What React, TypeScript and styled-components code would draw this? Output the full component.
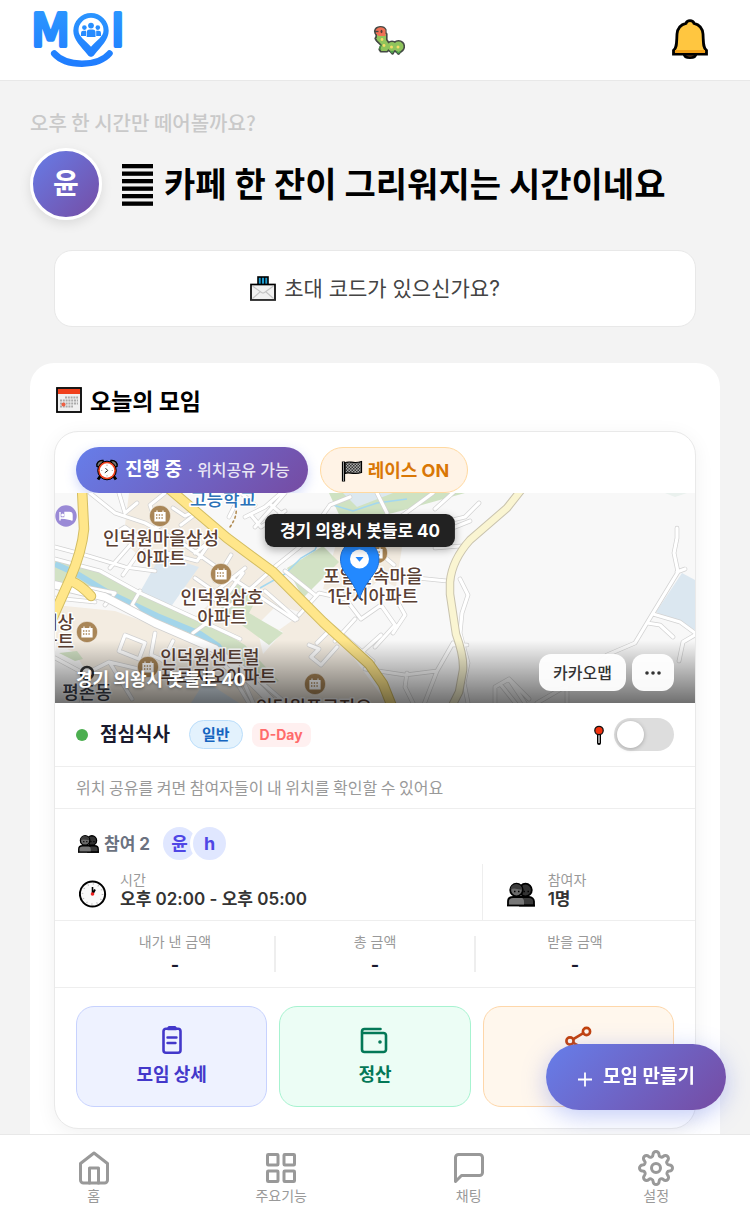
import React from "react";
import styled, { createGlobalStyle } from "styled-components";

const korean = `"Noto Sans CJK KR", Inter, sans-serif`;

const GlobalStyle = createGlobalStyle`
  *, *::before, *::after { box-sizing: border-box; }
  body { margin: 0; background: #f3f3f3; }
  body, button, input { font-family: Inter, "Noto Sans CJK KR", sans-serif; }
  button { cursor: pointer; padding: 0; border: 0; }
  h1, h2, h3, p, dl, dt, dd, ul { margin: 0; padding: 0; }
  svg { display: block; flex: none; }
`;

const Shell = styled.div`
  height: 100vh;
  display: flex;
  flex-direction: column;
  background: #f3f3f3;
  color: #000;
`;

const TopBar = styled.header`
  flex: none;
  height: 81px;
  display: flex;
  align-items: center;
  justify-content: space-between;
  padding: 0 30px;
  background: #fff;
  border-bottom: 1px solid #e8e8e8;
`;

const LogoLink = styled.a`
  padding-left: 2px;
`;

const BellButton = styled.button`
  width: 60px;
  height: 60px;
  display: grid;
  place-items: center;
  background: none;
`;

const Main = styled.main`
  flex: 1;
  min-height: 0;
  overflow-y: auto;
  scrollbar-width: none;
  padding: 28px 30px 0;
`;

const Hint = styled.p`
  font-family: ${korean};
  font-size: 20px;
  line-height: 28px;
  font-weight: 500;
  color: #c9c9c9;
`;

const Greeting = styled.div`
  display: flex;
  align-items: center;
  gap: 18px;
  margin-top: 11px;
`;

const Avatar = styled.div`
  flex: none;
  width: 72px;
  height: 72px;
  border-radius: 50%;
  border: 3px solid #fff;
  background: linear-gradient(135deg, #667eea, #764ba2) border-box;
  box-shadow: 0 4px 12px rgba(0, 0, 0, 0.1);
  display: grid;
  place-items: center;
  color: #fff;
  font-size: 28px;
  line-height: 36px;
  font-weight: 700;
`;

const Title = styled.h1`
  display: flex;
  align-items: center;
  gap: 10px;
  padding-top: 1px;
  font-size: 34px;
  line-height: 48px;
  font-weight: 700;
`;

const InviteButton = styled.button`
  display: flex;
  align-items: center;
  justify-content: center;
  gap: 8px;
  width: calc(100% - 48px);
  height: 77px;
  margin: 30px 24px 0;
  background: #fff;
  border: 1px solid #e8e8e8;
  border-radius: 18px;
  color: #444;
  font-size: 21px;
  line-height: 30px;
`;

const Section = styled.section`
  margin-top: 36px;
  padding: 20px 24px 60px;
  background: #fff;
  border-radius: 24px;
`;

const SectionTitle = styled.h2`
  display: flex;
  align-items: center;
  gap: 8px;
  padding-left: 2px;
  font-family: ${korean};
  font-size: 23px;
  line-height: 34px;
  font-weight: 700;
`;

const Card = styled.article`
  margin-top: 14px;
  background: #fff;
  border: 1px solid #e9e9e9;
  border-radius: 24px;
  box-shadow: 0 4px 20px rgba(0, 0, 0, 0.06);
  overflow: hidden;
`;

const Chips = styled.div`
  display: flex;
  gap: 12px;
  padding: 15px 21px 0;
`;

const Chip = styled.span<{ $tone: "live" | "race" }>`
  height: 46px;
  display: flex;
  align-items: center;
  border-radius: 23px;
  font-weight: 700;
  line-height: 28px;
  ${(p) =>
    p.$tone === "live"
      ? `padding: 0 18px 0 19px; gap: 6px; font-size: 19px; color: #fff;
         background: linear-gradient(135deg, #667eea, #764ba2);
         box-shadow: 0 4px 12px rgba(102, 126, 234, 0.3);`
      : `padding: 2px 18px 0 20px; gap: 5px; font-size: 18px; color: #d97706;
         background: #fff3e6; border: 1px solid #ffd9a0;`}
`;

const ChipNote = styled.span`
  font-size: 16px;
  font-weight: 500;
  color: rgba(255, 255, 255, 0.85);
`;

const MapBox = styled.div`
  position: relative;
  height: 210px;
  overflow: hidden;
  background: #f8f8f8;
`;

const MapShade = styled.div`
  position: absolute;
  inset: auto 0 0 0;
  display: flex;
  align-items: center;
  gap: 6px;
  padding: 14px 21px 12px;
  background: linear-gradient(transparent, rgba(0, 0, 0, 0.55));
`;

const MapAddress = styled.p`
  flex: 1;
  padding-top: 15px;
  color: #fff;
  font-size: 18px;
  line-height: 22px;
  font-weight: 700;
  text-shadow: 0 1px 3px rgba(0, 0, 0, 0.4);
`;

const MapButton = styled.button<{ $narrow?: boolean }>`
  width: ${(p) => (p.$narrow ? 42 : 87)}px;
  height: 37px;
  display: grid;
  place-items: center;
  border-radius: 12px;
  background: rgba(255, 255, 255, 0.95);
  color: #333;
  font-size: 16px;
  line-height: 22px;
  font-weight: 500;
`;

const Tooltip = styled.div`
  position: absolute;
  top: 21px;
  left: calc(50% - 15px);
  transform: translateX(-50%);
  padding: 5px 15px 4px;
  border-radius: 9px;
  background: #222;
  box-shadow: 0 3px 9px rgba(0, 0, 0, 0.3);
  color: #fff;
  font-size: 17px;
  line-height: 24px;
  font-weight: 700;
  white-space: nowrap;
`;

const StatusRow = styled.div`
  display: flex;
  align-items: center;
  height: 64px;
  padding: 0 21px;
  border-bottom: 1px solid #eee;
`;

const Dot = styled.span`
  width: 12px;
  height: 12px;
  border-radius: 50%;
  background: #4caf50;
`;

const EventName = styled.h3`
  margin: 0 19px 0 12px;
  color: #1a1a2e;
  font-size: 19px;
  line-height: 28px;
  font-weight: 700;
`;

const Badge = styled.span<{ $tone: "kind" | "day" }>`
  display: grid;
  place-items: center;
  font-weight: 700;
  line-height: 22px;
  ${(p) =>
    p.$tone === "kind"
      ? `height: 29px; padding: 0 12px; border-radius: 15px; font-size: 15px;
         background: #e3f2fd; border: 1px solid #bbdefb; color: #1565c0;`
      : `height: 24px; padding: 0 8px; border-radius: 8px; margin-left: 9px;
         font-size: 14px; background: #fff0f0; color: #ff6b6b;`}
`;

const ShareToggle = styled.label`
  display: flex;
  align-items: center;
  gap: 9px;
  margin-left: auto;
`;

const Switch = styled.input`
  appearance: none;
  position: relative;
  width: 60px;
  height: 33px;
  margin: 0;
  border-radius: 17px;
  background: #ddd;
  cursor: pointer;
  &::before {
    content: "";
    position: absolute;
    top: 3px;
    left: 3px;
    width: 27px;
    height: 27px;
    border-radius: 50%;
    background: #fff;
    box-shadow: 0 1px 4px rgba(0, 0, 0, 0.25);
  }
  &:checked { background: #667eea; }
  &:checked::before { left: 30px; }
`;

const Notice = styled.p`
  padding: 8px 21px 9px;
  border-bottom: 1px solid #eee;
  color: #999;
  font-family: ${korean};
  font-size: 16px;
  line-height: 24px;
`;

const People = styled.div`
  display: flex;
  align-items: center;
  padding: 14px 21px 0 23px;
  height: 55px;
  color: #6b7280;
  font-size: 17px;
  line-height: 24px;
  font-weight: 700;
`;

const PeopleCount = styled.span`
  margin: 0 10px 0 5px;
`;

const Member = styled.span`
  width: 39px;
  height: 39px;
  display: grid;
  place-items: center;
  border-radius: 50%;
  border: 3px solid #fff;
  background: #e0e7ff;
  color: #4f46e5;
  font-size: 18px;
  & + & { margin-left: -9px; }
`;

const Facts = styled.div`
  display: grid;
  grid-template-columns: 2fr 1fr;
  border-bottom: 1px solid #eee;
`;

const Fact = styled.div`
  display: flex;
  align-items: center;
  gap: 13px;
  height: 56px;
  padding: 3px 24px 0;
  & + & { border-left: 1px solid #eee; }
`;

const FactText = styled.dl`
  padding-bottom: 8px;
`;

const FactLabel = styled.dt`
  color: #999;
  font-size: 14px;
  line-height: 18px;
`;

const FactValue = styled.dd`
  color: #333;
  font-size: 17px;
  line-height: 20px;
  font-weight: 600;
`;

const Amounts = styled.dl`
  display: grid;
  grid-template-columns: repeat(3, 1fr);
  padding: 10px 20px;
  border-bottom: 1px solid #eee;
`;

const Amount = styled.div`
  position: relative;
  text-align: center;
  & + &::before {
    content: "";
    position: absolute;
    left: -1px;
    top: 5px;
    width: 2px;
    height: 36px;
    background: #eee;
  }
`;

const AmountLabel = styled.dt`
  color: #999;
  font-size: 14px;
  line-height: 22px;
`;

const AmountValue = styled.dd`
  color: #1a1a2e;
  font-size: 18px;
  line-height: 24px;
  font-weight: 700;
`;

const Actions = styled.div`
  display: grid;
  grid-template-columns: repeat(3, 1fr);
  gap: 12px;
  padding: 18px 21px 21px;
`;

const tones = {
  indigo: ["#eef2ff", "#c7d2fe", "#4338ca"],
  green: ["#ecfdf5", "#a7f3d0", "#047857"],
  orange: ["#fff7ed", "#fed7aa", "#c2410c"],
};

const ActionButton = styled.button<{ $tone: keyof typeof tones }>`
  height: 101px;
  display: flex;
  flex-direction: column;
  align-items: center;
  justify-content: center;
  gap: 7px;
  border-radius: 18px;
  background: ${(p) => tones[p.$tone][0]};
  border: 1px solid ${(p) => tones[p.$tone][1]};
  color: ${(p) => tones[p.$tone][2]};
  font-size: 18px;
  line-height: 26px;
  font-weight: 700;
`;

const CreateButton = styled.button`
  position: fixed;
  right: 24px;
  bottom: 108px;
  width: 180px;
  height: 66px;
  display: flex;
  align-items: center;
  justify-content: center;
  gap: 10px;
  border-radius: 33px;
  background: linear-gradient(135deg, #667eea, #764ba2);
  box-shadow: 0 6px 24px rgba(102, 126, 234, 0.4);
  color: #fff;
  font-size: 19px;
  line-height: 28px;
  font-weight: 700;
`;

const TabBar = styled.nav`
  flex: none;
  position: relative;
  height: 84px;
  display: grid;
  grid-template-columns: repeat(4, 1fr);
  background: #fff;
  border-top: 1px solid #e8e8e8;
`;

const Tab = styled.a`
  display: flex;
  flex-direction: column;
  align-items: center;
  padding-top: 15px;
  color: #999;
  font-size: 14px;
  line-height: 20px;
  text-decoration: none;
`;

/* ---------- drawings ---------- */

const Logo = () => (
  <svg width="86" height="60" viewBox="32 10 86 60" overflow="visible" role="img" aria-label="MOI">
    <defs>
      <linearGradient id="logoBlue" x1="0" y1="12" x2="0" y2="67" gradientUnits="userSpaceOnUse">
        <stop offset="0" stopColor="#2b95ff" />
        <stop offset="1" stopColor="#1f7cff" />
      </linearGradient>
    </defs>
    <g fill="url(#logoBlue)" stroke="url(#logoBlue)" strokeWidth="4" strokeLinejoin="round" fontFamily="DejaVu Sans" fontSize="44">
      <text x="31.4" y="46.400">M</text>
      <text x="111.300" y="46.400">I</text>
    </g>
    <path fillRule="evenodd" fill="url(#logoBlue)" d="M91 13a17.7 17.7 0 0 0-17.7 17.7c0 9.300 8 16 14.300 24 2 2.800 4.800 2.800 6.800 0 6.300-8 14.300-14.700 14.300-24A17.700 17.700 0 0 0 91 13zm0 4.800a12.500 12.500 0 0 1 12.500 12.500c0 6-6 9.500-12.500 16.500-6.500-7-12.500-10.500-12.500-16.500A12.500 12.500 0 0 1 91 17.800z" />
    <g fill="url(#logoBlue)">
      <circle cx="91" cy="25.600" r="2.900" />
      <path d="M86.700 37v-4.400a3 3 0 0 1 3-3h2.800a3 3 0 0 1 3 3V37z" />
      <circle cx="84.400" cy="27.600" r="2.300" />
      <path d="M81 36v-3a2.300 2.300 0 0 1 2.300-2.300H86V36z" />
      <circle cx="97.800" cy="27.600" r="2.300" />
      <path d="M101 36v-3a2.300 2.300 0 0 0-2.300-2.300h-2.500V36z" />
    </g>
    <path d="M54.200 53.500C66 67 98 67 109.500 53.500" fill="none" stroke="url(#logoBlue)" strokeWidth="6.500" strokeLinecap="round" />
  </svg>
);

const caterpillarBody = (
  <>
    <path d="M4 10h9v6l4 6-3 5H8l1-6-5-5z" />
    <circle cx="19" cy="22.500" r="4.500" />
    <circle cx="25.500" cy="22.500" r="5" />
    <path d="M17 26h4l-1.500 3zM23 26h5l-2.500 3.200zM4.500 13L3 14.500 5.500 17zM9 21l-2 4.500 5 .5z" />
  </>
);

const Caterpillar = () => (
  <svg width="32" height="32" viewBox="0 0 32 32" aria-hidden="true">
    <g fill="#454a45" stroke="#454a45" strokeWidth="3.200" strokeLinejoin="round">
      {caterpillarBody}
      <path d="M2.500 7C3.500 2.500 10.500 2.500 12 6v5.500H5.500L3 9z" />
    </g>
    <g fill="#8fc45c">{caterpillarBody}</g>
    <path d="M2.500 7C3.500 2.500 10.500 2 12.500 6v6H5.500L3 9.500z" fill="#f07055" />
    <path d="M8 25c-1.500 0-1.500-1 0-4M17.500 27l1.500 1.500 1.500-1.500M23.500 27.500l2 1.300 2-1.300" stroke="#4c9f4b" strokeWidth="1.400" fill="none" />
    <path d="M1.500 7.500h4" stroke="#454a45" strokeWidth="1.400" />
    <ellipse cx="8.500" cy="7.500" rx="1" ry="1.800" fill="#573b39" />
    <g fill="#f6dc67">
      <circle cx="9" cy="15.500" r="1.400" />
      <circle cx="11" cy="21.500" r="1.400" />
      <circle cx="18.500" cy="23" r="1.500" />
      <circle cx="25" cy="23" r="1.500" />
    </g>
  </svg>
);

const Bell = () => (
  <svg width="40" height="44" viewBox="0 0 40 44" aria-hidden="true">
    <path d="M14 36h12c-.500 5-11.500 5-12 0z" fill="#915329" stroke="#000" strokeWidth="2.600" />
    <path d="M3.500 36v-3.500C7 30 6.500 25 7 16 7.500 10 11 6.500 16 5.300c1-3.500 7-3.500 8 0 5 1.200 8.500 4.700 9 10.700.500 9 0 14 3.500 16.500V36z" fill="#ffc640" stroke="#000" strokeWidth="2.800" />
    <path d="M5 32h30v3H5z" fill="#f0a018" />
  </svg>
);

const Bars = () => (
  <svg width="34" height="42" viewBox="0 0 34 42" aria-hidden="true">
    {[0, 7.500, 15, 22.500, 30, 37.500].map((y) => (
      <rect key={y} x="2" y={y} width="31" height="4.300" fill="#000" />
    ))}
  </svg>
);

const Envelope = () => (
  <svg width="26" height="26" viewBox="0 0 26 26" aria-hidden="true">
    <rect x="8" y="1" width="10" height="10" fill="#1e9cd0" stroke="#000" strokeWidth="1.600" />
    <path d="M11.300 1v9M14.700 1v9" stroke="#000" strokeWidth="1.200" />
    <rect x="1" y="8.500" width="24" height="15.500" fill="#f1f1f1" stroke="#000" strokeWidth="1.700" />
    <path d="M2.500 10l9 6.500c1 .600 2 .600 3 0l9-6.500M2.500 22.500l8-7M23.500 22.500l-8-7" fill="none" stroke="#c4c4c4" strokeWidth="1.100" />
    <path d="M1 24.200h24" stroke="#3f3f3f" strokeWidth="1.600" />
  </svg>
);

const Calendar = () => (
  <svg width="26" height="26" viewBox="0 0 26 26" aria-hidden="true">
    <rect x="1" y="1" width="24" height="24" fill="#f0f0f0" stroke="#000" strokeWidth="1.800" />
    <rect x="2" y="2" width="22" height="5" fill="#f0401c" />
    <path d="M9 10.500h13M4 13.500h18M4 16.500h18M4 19.500h13" stroke="#aaa" strokeWidth="2" strokeDasharray="2 .8" />
    <circle cx="7.500" cy="17.500" r="2" fill="#ee6044" />
  </svg>
);

const AlarmClock = () => (
  <svg width="24" height="24" viewBox="0 0 24 24" aria-hidden="true">
    <path d="M5.500 18L3 21.500M18.500 18l2.500 3.500" stroke="#000" strokeWidth="3" />
    <path d="M2 8.500C1 5 4 2 8 2.500L8.500 5 4.500 9zM22 8.500C23 5 20 2 16 2.500L15.500 5l4 4z" fill="#777" stroke="#000" strokeWidth="1.400" />
    <circle cx="12" cy="12.500" r="9.300" fill="#f0401c" stroke="#000" strokeWidth="1" />
    <circle cx="12" cy="12.500" r="7.200" fill="#fff" />
    <path d="M10.500 10.200l2.300 2.300-3 2.300" fill="none" stroke="#222" strokeWidth="1" />
    <g fill="#999">
      <circle cx="12" cy="7.200" r=".6" />
      <circle cx="17.300" cy="12.500" r=".6" />
      <circle cx="12" cy="17.800" r=".6" />
      <circle cx="6.700" cy="12.500" r=".6" />
    </g>
  </svg>
);

const Flag = () => (
  <svg width="22" height="24" viewBox="0 0 22 24" aria-hidden="true">
    <defs>
      <pattern id="check" width="3" height="3" patternUnits="userSpaceOnUse">
        <rect width="3" height="3" fill="#aaa" />
        <rect width="1.500" height="1.500" fill="#333" />
        <rect x="1.500" y="1.500" width="1.500" height="1.500" fill="#333" />
      </pattern>
    </defs>
    <path d="M4 4c4-3 8 1.500 16.500-1.500v11C12 16.500 8 12 4 14.500z" fill="url(#check)" stroke="#000" strokeWidth="1.200" />
    <path d="M2.500 2.500v20" stroke="#000" strokeWidth="3.200" />
    <path d="M2.500 3v19" stroke="#999" strokeWidth="1" />
  </svg>
);

const Pushpin = () => (
  <svg width="12" height="20" viewBox="0 0 12 20" aria-hidden="true">
    <path d="M6 8v10" stroke="#000" strokeWidth="4" strokeLinecap="round" />
    <path d="M6 9v9" stroke="#ccc" strokeWidth="1.500" />
    <circle cx="6" cy="5.500" r="4.200" fill="#f4330f" stroke="#111" strokeWidth="1.300" />
  </svg>
);

const PeopleIcon = ({ size }: { size: number }) => (
  <svg width={size} height={size} viewBox="0 0 28 28" aria-hidden="true">
    <g stroke="#000" strokeWidth="1.800">
      <circle cx="18.500" cy="10" r="6.300" fill="#333" />
      <path d="M13 25.500v-4c0-3 2-4.500 4-4.500h5c3 0 5 2 5 4.500v4z" fill="#3a3a3a" />
      <circle cx="9.500" cy="10" r="6.300" fill="#6b6b6b" />
      <path d="M1 25.500v-4C1 18.500 3 17 6 17h6c3 0 5 2 5 4.500v4z" fill="#777" stroke="none" />
      <path d="M1 25.500v-4C1 18.500 3 17 6 17h11" fill="none" />
    </g>
    <path d="M3.500 9.500C3.500 5.500 7 3.800 10 4.200c3 .300 5 2 5 5-4 1-7-2-11.500.300z" fill="#3c3c3c" />
    <path d="M7 11.500h1.500M11 11.500h1.500M16.500 11.500H18M20.500 11.500H22" stroke="#000" strokeWidth="1.600" />
    <path d="M0 25.500h28" stroke="#000" strokeWidth="1.800" />
  </svg>
);

const ClockIcon = () => (
  <svg width="28" height="28" viewBox="0 0 28 28" aria-hidden="true">
    <circle cx="13.500" cy="14" r="12.600" fill="#fafafa" stroke="#000" strokeWidth="2" />
    <circle cx="13.500" cy="14" r="10" fill="none" stroke="#bbb" strokeWidth="1.600" strokeDasharray="1 4.236" />
    <path d="M13.500 14V7" stroke="#000" strokeWidth="1.600" />
    <path d="M13.500 14l2.500-4.500" stroke="#000" strokeWidth="2" />
    <circle cx="13.500" cy="14" r="1.800" fill="#ee2020" />
  </svg>
);

const lineIcon = { fill: "none", stroke: "currentColor", strokeWidth: 2, strokeLinecap: "round", strokeLinejoin: "round" } as const;

const ClipboardIcon = () => (
  <svg width="30" height="30" viewBox="0 0 30 30" {...lineIcon} aria-hidden="true">
    <rect x="6.500" y="3.800" width="17" height="24" rx="2.500" strokeWidth="2.600" />
    <path d="M11 4l1-1.700h6L19 4z" fill="currentColor" strokeWidth="2.600" />
    <path d="M10.500 12.500h9M10.500 18h8" strokeWidth="2.400" />
  </svg>
);

const WalletIcon = () => (
  <svg width="30" height="30" viewBox="0 0 30 30" {...lineIcon} strokeWidth="2.600" aria-hidden="true">
    <path d="M20.500 4H4.500A2.500 2.500 0 0 0 2 6.500v18A2.500 2.500 0 0 0 4.500 27h19a2.500 2.500 0 0 0 2.500-2.500v-14A2.500 2.500 0 0 0 23.500 8H2.500" />
    <circle cx="20" cy="17" r=".800" fill="currentColor" strokeWidth="2" />
  </svg>
);

const ShareIcon = () => (
  <svg width="30" height="30" viewBox="0 0 30 30" {...lineIcon} strokeWidth="2.600" aria-hidden="true">
    <circle cx="23.500" cy="6.500" r="3.600" />
    <circle cx="7" cy="16" r="3.600" />
    <circle cx="23.500" cy="25" r="3.600" />
    <path d="M10.300 14.200l10-6M10.300 17.800l10 5.500" />
  </svg>
);

const tabIcons = {
  home: (
    <>
      <path d="M3 9l9-7 9 7v11a2 2 0 0 1-2 2H5a2 2 0 0 1-2-2z" />
      <polyline points="9 22 9 12 15 12 15 22" />
    </>
  ),
  grid: (
    <>
      <rect x="3" y="3" width="7" height="7" rx=".5" />
      <rect x="14" y="3" width="7" height="7" rx=".5" />
      <rect x="14" y="14" width="7" height="7" rx=".5" />
      <rect x="3" y="14" width="7" height="7" rx=".5" />
    </>
  ),
  chat: <path d="M21 15a2 2 0 0 1-2 2H7l-4 4V5a2 2 0 0 1 2-2h14a2 2 0 0 1 2 2z" />,
  gear: (
    <>
      <circle cx="12" cy="12" r="3" />
      <path d="M19.400 15a1.650 1.650 0 0 0 .33 1.820l.06.06a2 2 0 0 1 0 2.830 2 2 0 0 1-2.830 0l-.06-.06a1.650 1.650 0 0 0-1.820-.33 1.650 1.650 0 0 0-1 1.510V21a2 2 0 0 1-2 2 2 2 0 0 1-2-2v-.09A1.650 1.650 0 0 0 9 19.400a1.650 1.650 0 0 0-1.820.33l-.06.06a2 2 0 0 1-2.830 0 2 2 0 0 1 0-2.830l.06-.06a1.650 1.650 0 0 0 .33-1.820 1.650 1.650 0 0 0-1.510-1H3a2 2 0 0 1-2-2 2 2 0 0 1 2-2h.09A1.650 1.650 0 0 0 4.600 9a1.650 1.650 0 0 0-.33-1.820l-.06-.06a2 2 0 0 1 0-2.830 2 2 0 0 1 2.830 0l.06.06a1.650 1.650 0 0 0 1.820.33H9a1.650 1.650 0 0 0 1-1.510V3a2 2 0 0 1 2-2 2 2 0 0 1 2 2v.09a1.650 1.650 0 0 0 1 1.510 1.650 1.650 0 0 0 1.820-.33l.06-.06a2 2 0 0 1 2.830 0 2 2 0 0 1 0 2.830l-.06.06a1.650 1.650 0 0 0-.33 1.820V9a1.650 1.650 0 0 0 1.510 1H21a2 2 0 0 1 2 2 2 2 0 0 1-2 2h-.09a1.650 1.650 0 0 0-1.510 1z" />
    </>
  ),
};

const tabs: { label: string; icon: keyof typeof tabIcons }[] = [
  { label: "홈", icon: "home" },
  { label: "주요기능", icon: "grid" },
  { label: "채팅", icon: "chat" },
  { label: "설정", icon: "gear" },
];

/* ---------- map ---------- */

const streets = [
  "M35 0l25 20 30 10 40 22 50 35 60 40",
  "M0 54l30 8 40 12 30 4",
  "M0 66l45 12 40 22 70 32 30 14",
  "M55 75l30-34 20-8M68 82l24-34M85 98l-8 14 6 6",
  "M110 0l-15 12 4 12M64 0l6 20 12-10M60 40l10-6 14 10",
  "M118 15l12 8 8-4M126 32l16-12M140 60l20-16M112 60l30 8 18-26",
  "M140 85l20 14 30-24M176 62l-16 26M150 100l16 10 22-30",
  "M190 24l20-10 16-14M200 34l30-34M196 22l10 12 24-16M216 12l12 10",
  "M170 0l10 12-6 12M186 0l14 12",
  "M138 140l22-16 24-18 38-34 25-20 28-40 20-8",
  "M230 78l30 24M210 98l32 28M244 122l20-22 26 6",
  "M286 100l20 26 20-14 14 20-20 22M262 150l16-16 40 34M300 126l-20 22M254 152l10 4-8 8 10 8 16-18",
  "M338 140l12-18-10-18M306 160l20-18",
  "M322 0l10 20-4 30-12 30M292 64l40 18 60 6M325 60l14 12",
  "M378 0l-30 22-20 10M385 30l25-6 14-14M395 36l20-8M380 55l26-2M400 -2l-20 18",
  "M405 86l8 16-6 18-2 20 8 30-4 20 4 20",
  "M310 176l40 6 32-4 16-28M382 178l-14 36M352 180l-2 14 8 16M398 152h14",
  "M0 165l30 16 24-12 34 8M34 182l-8 28M55 170l22 36",
  "M70 142l20 8-6 16-20-8zM100 140l-4 22 14 6M118 148l-10 20",
  "M145 148l30 30 20 34M165 158l28 20 40 34M180 170l20 44",
  "M440 212v-18l14-8 20 20M454 186l16 24M446 192l16 20M512 212v-36",
  "M622 35v10l-3 15 4 19-25 41-18 30-28 12-27 23-43 25",
  "M598 121l27 8 15 11M592 130l13 2 13 12M640 142l-12 7-4 19M622 79l8-3",
  "M20 92l40 8-10 12M0 105l40 4",
];

const markers: [number, number][] = [
  [105, 23],
  [166, 81],
  [32, 139],
  [93, 174],
  [260, 191],
  [322, 60],
];

const labels: { x: number; y: number; text: string; anchor?: "end"; fill?: string }[] = [
  { x: 168, y: 13, text: "고등학교", fill: "#2b72b8" },
  { x: 106, y: 52, text: "인덕원마을삼성" },
  { x: 106, y: 72, text: "아파트" },
  { x: 167, y: 111, text: "인덕원삼호" },
  { x: 167, y: 131, text: "아파트" },
  { x: 318, y: 90, text: "포일숲속마을" },
  { x: 318, y: 110, text: "1단지아파트" },
  { x: 19, y: 136, text: "세상", anchor: "end" },
  { x: 19, y: 155, text: "아파트", anchor: "end" },
  { x: 155, y: 171, text: "인덕원센트럴" },
  { x: 163, y: 190, text: "푸르지오아파트" },
  { x: 259, y: 221, text: "인덕원푸르지오" },
  { x: 32, y: 206, text: "평촌동", fill: "#3b3f4a" },
];

const CityMap = () => (
  <svg width="100%" height="210" viewBox="0 0 640 210" preserveAspectRatio="xMidYMid slice" role="img" aria-label="지도">
    <rect width="640" height="210" fill="#f8f8f8" />
    <path d="M74 0h48l100 82 60 60 50 68H50L20 160 0 150V112l60 6 60 22 38-32-58-30-32-30z" fill="#f3ece1" />
    <path d="M282 48l60-8-10 40-30 26-34-10zM325 38l22 16-6 40-40-20z" fill="#f3ece1" />
    <path d="M200 125l28 14-20 22M222 112l-22 22 14 10 34-24z" fill="#f8f8f8" />
    <path d="M168 118l46 34 14 -12-34-20 12-22-22-8-20 20z" fill="#d2e2c5" />
    <path d="M232 75l36-22 16 16-36 36z" fill="#d2e2c5" />
    <path d="M274 0l14 30 50-10 72-20z" fill="#cfe2c2" />
    <path d="M288 0l14 14 36-14z" fill="#dce8ef" />
    <path d="M0 64l50 16 50 28 60 26 30 18 34 36-20 6-40-40-50-20-60-30L0 88z" fill="#d2e2c5" />
    <path d="M4 160l16 8 8-2-6-8z" fill="#d2e2c5" />
    <path d="M106 62l38 12-29 41-30-16z" fill="#dbe7f0" />
    <path d="M150 188l34 22h-48z" fill="#dbe7f0" />
    <path d="M627 80l13 7v50l-22-10-17-8z" fill="#dbe7f0" />
    <path d="M610 0h22l-12 4z" fill="#eaf1ee" />
    <path d="M0 71l22 10 30 18 50 24 43 18 18 12 14 20" fill="none" stroke="#a3d5ea" strokeWidth="6" />
    <path d="M205 95l25-14 16-16 14-8 8-20M278 12l20 6 24-8 30-4" fill="none" stroke="#a3d8f0" strokeWidth="1.500" />
    <g fill="none" strokeLinejoin="round" strokeLinecap="round">
      <path d={streets.join("")} stroke="#d2d2d2" strokeWidth="4.600" />
      <path d={streets.join("")} stroke="#fff" strokeWidth="3.200" />
      <path d="M0 92l50 12 50 26 60 26 40 36 20 20" stroke="#cfcfcf" strokeWidth="9" />
      <path d="M0 92l50 12 50 26 60 26 40 36 20 20" stroke="#fff" strokeWidth="7.500" />
      <path d="M467-4l-15 19-37 32q-18 20-20 42l0 12 6 40q8 22 7 36l-4 22-8 16" stroke="#c9c3ae" strokeWidth="8.500" />
      <path d="M467-4l-15 19-37 32q-18 20-20 42l0 12 6 40q8 22 7 36l-4 22-8 16" stroke="#faf5d2" strokeWidth="6.500" />
      <path d="M16 88q10 4 20 15M27-4l2 40q-2 22-14 50L-2 124M112-6l60 51 46 34 50 50 46 42 14 20 12 30" stroke="#d3bd62" strokeWidth="10.500" />
      <path d="M16 88q10 4 20 15M27-4l2 40q-2 22-14 50L-2 124M112-6l60 51 46 34 50 50 46 42 14 20 12 30" stroke="#ffe68a" strokeWidth="8.500" />
      <path d="M175 34q10-14 4-26" stroke="#b08a50" strokeWidth="1.500" strokeDasharray="2 3" />
    </g>
    {markers.map(([x, y]) => (
      <g key={`${x}-${y}`}>
        <circle cx={x} cy={y} r="10.700" fill="#a98657" stroke="#fff" strokeWidth=".6" />
        <path d={`M${x - 5} ${y - 3.500}h10v8.500h-10zM${x - 3} ${y - 5.500}v2M${x + 3} ${y - 5.500}v2`} fill="#fff" stroke="#fff" strokeWidth="1.200" />
        <path d={`M${x - 4} ${y - 1}h8M${x - 4} ${y + 2}h8`} stroke="#a98657" strokeWidth="1.400" strokeDasharray="1.400 1.300" />
      </g>
    ))}
    <circle cx="11" cy="23" r="10.700" fill="#9a8ad6" />
    <path d="M5 19v8.500M5 25h12v2.500M10 19.500h4.500q2.500 0 2.500 2.500v3h-7z" stroke="#fff" strokeWidth="1.400" fill="#fff" />
    <circle cx="7.600" cy="22" r="1.500" fill="#fff" />
    <circle cx="32" cy="180" r="6" fill="#fff" stroke="#333" strokeWidth="2.500" />
    <g fontFamily="Inter, 'Noto Sans CJK KR', sans-serif" fontSize="18" fontWeight="500" textAnchor="middle" stroke="#fff" strokeWidth="3" strokeLinejoin="round" paintOrder="stroke">
      {labels.map((l) => (
        <text key={`${l.text}-${l.y}`} x={l.x} y={l.y} fill={l.fill ?? "#5a4034"} textAnchor={l.anchor ?? "middle"}>
          {l.text}
        </text>
      ))}
    </g>
    <path d="M304.500 106c-3-10-8-17-13-24-4-5-6-10-6-16a19.200 19.200 0 0 1 38.400 0c0 6-2 11-6 16-5 7-10.400 14-13.400 24z" fill="#2389ff" stroke="#1c6fd6" strokeWidth="1" />
    <circle cx="304.500" cy="66" r="9.500" fill="#fff" />
    <path d="M300.500 64h8l-4 4.800z" fill="#2389ff" />
  </svg>
);

export default function App() {
  return (
    <Shell>
      <GlobalStyle />
      <TopBar>
        <LogoLink href="#home">
          <Logo />
        </LogoLink>
        <Caterpillar />
        <BellButton aria-label="알림">
          <Bell />
        </BellButton>
      </TopBar>

      <Main>
        <Hint>오후 한 시간만 떼어볼까요?</Hint>
        <Greeting>
          <Avatar>윤</Avatar>
          <Title>
            <Bars />
            카페 한 잔이 그리워지는 시간이네요
          </Title>
        </Greeting>

        <InviteButton>
          <Envelope />
          초대 코드가 있으신가요?
        </InviteButton>

        <Section>
          <SectionTitle>
            <Calendar />
            오늘의 모임
          </SectionTitle>
          <Card>
            <Chips>
              <Chip $tone="live">
                <AlarmClock />
                진행 중<ChipNote>· 위치공유 가능</ChipNote>
              </Chip>
              <Chip $tone="race">
                <Flag />
                레이스 ON
              </Chip>
            </Chips>

            <MapBox>
              <CityMap />
              <Tooltip>경기 의왕시 봇들로 40</Tooltip>
              <MapShade>
                <MapAddress>경기 의왕시 봇들로 40</MapAddress>
                <MapButton>카카오맵</MapButton>
                <MapButton $narrow aria-label="더보기">
                  <svg width="16" height="4" viewBox="0 0 16 4" fill="currentColor" aria-hidden="true">
                    <circle cx="2" cy="2" r="1.800" />
                    <circle cx="8" cy="2" r="1.800" />
                    <circle cx="14" cy="2" r="1.800" />
                  </svg>
                </MapButton>
              </MapShade>
            </MapBox>

            <StatusRow>
              <Dot />
              <EventName>점심식사</EventName>
              <Badge $tone="kind">일반</Badge>
              <Badge $tone="day">D-Day</Badge>
              <ShareToggle>
                <Pushpin />
                <Switch type="checkbox" aria-label="위치 공유" />
              </ShareToggle>
            </StatusRow>

            <Notice>위치 공유를 켜면 참여자들이 내 위치를 확인할 수 있어요</Notice>

            <People>
              <PeopleIcon size={21} />
              <PeopleCount>참여 2</PeopleCount>
              <Member>윤</Member>
              <Member>h</Member>
            </People>

            <Facts>
              <Fact>
                <ClockIcon />
                <FactText>
                  <FactLabel>시간</FactLabel>
                  <FactValue>오후 02:00 - 오후 05:00</FactValue>
                </FactText>
              </Fact>
              <Fact>
                <PeopleIcon size={28} />
                <FactText>
                  <FactLabel>참여자</FactLabel>
                  <FactValue>1명</FactValue>
                </FactText>
              </Fact>
            </Facts>

            <Amounts>
              {["내가 낸 금액", "총 금액", "받을 금액"].map((label) => (
                <Amount key={label}>
                  <AmountLabel>{label}</AmountLabel>
                  <AmountValue>-</AmountValue>
                </Amount>
              ))}
            </Amounts>

            <Actions>
              <ActionButton $tone="indigo">
                <ClipboardIcon />
                모임 상세
              </ActionButton>
              <ActionButton $tone="green">
                <WalletIcon />
                정산
              </ActionButton>
              <ActionButton $tone="orange">
                <ShareIcon />
                공유
              </ActionButton>
            </Actions>
          </Card>
        </Section>
      </Main>

      <CreateButton>
        <svg width="16" height="22" viewBox="0 0 16 22" stroke="currentColor" strokeWidth="1.800" aria-hidden="true">
          <path d="M1 13.500h14M8 6.500v14" />
        </svg>
        모임 만들기
      </CreateButton>

      <TabBar>
        {tabs.map((tab) => (
          <Tab key={tab.label} href={`#${tab.icon}`}>
            <svg width="36" height="36" viewBox="0 0 24 24" {...lineIcon} aria-hidden="true">
              {tabIcons[tab.icon]}
            </svg>
            {tab.label}
          </Tab>
        ))}
      </TabBar>
    </Shell>
  );
}
